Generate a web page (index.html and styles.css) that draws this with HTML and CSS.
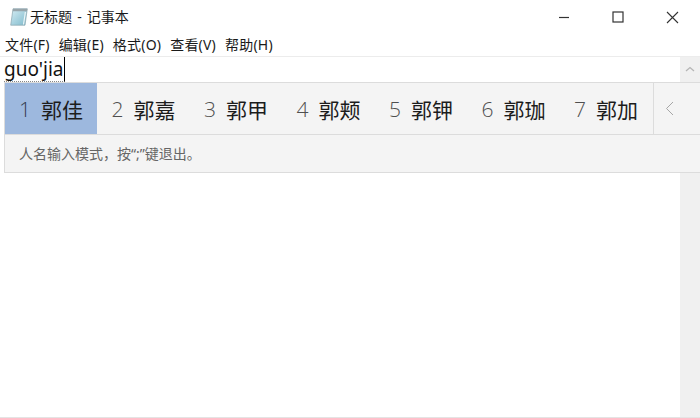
FILE: index.html
```html
<!DOCTYPE html>
<html lang="zh-CN">
<head>
<meta charset="utf-8">
<title>无标题 - 记事本</title>
<link rel="stylesheet" href="styles.css">
</head>
<body>
<div class="window">
  <header class="titlebar">
    <div class="title-left">
      <svg class="app-icon" width="18" height="18" viewBox="0 0 18 18">
        <defs>
          <linearGradient id="pad" x1="0" y1="0" x2="1" y2="1">
            <stop offset="0" stop-color="#d6edf4"/>
            <stop offset="1" stop-color="#7db9cb"/>
          </linearGradient>
        </defs>
        <path d="M3 .8H17.300L15 17.200H.7Z" fill="url(#pad)" stroke="#8aa5ae" stroke-width=".7"/>
        <path d="M3 .8H17.300L17 3.200H2.700Z" fill="#98a5aa"/>
        <path d="M15.400 4L13.500 16.500" stroke="#eef6f8" stroke-width="1.200"/>
      </svg>
      <span class="title-text">无标题 - 记事本</span>
    </div>
    <div class="controls">
      <span class="control">
        <svg width="12" height="12" viewBox="0 0 12 12"><path d="M1 6.500H11" stroke="#333" stroke-width="1.200"/></svg>
      </span>
      <span class="control">
        <svg width="12" height="12" viewBox="0 0 12 12"><rect x="1" y="1" width="10" height="10" fill="none" stroke="#333" stroke-width="1.200"/></svg>
      </span>
      <span class="control">
        <svg width="13" height="13" viewBox="0 0 13 13"><path d="M1 1L12 12M12 1L1 12" stroke="#333" stroke-width="1.100"/></svg>
      </span>
    </div>
  </header>
  <nav class="menubar">
    <span>文件(F)</span><span>编辑(E)</span><span>格式(O)</span><span>查看(V)</span><span>帮助(H)</span>
  </nav>
  <main class="editor">
    <div class="text-area">
      <span class="composition">guo'jia</span>
    </div>
    <div class="scrollbar">
      <svg class="scroll-up" width="10" height="6" viewBox="0 0 10 6"><path d="M1 5L5 1.500L9 5" fill="none" stroke="#b5b5b5" stroke-width="1.300"/></svg>
    </div>
    <section class="ime">
      <div class="candidates">
        <div class="candidate selected"><span class="num">1</span><span class="word">郭佳</span></div>
        <div class="candidate"><span class="num">2</span><span class="word">郭嘉</span></div>
        <div class="candidate"><span class="num">3</span><span class="word">郭甲</span></div>
        <div class="candidate"><span class="num">4</span><span class="word">郭颊</span></div>
        <div class="candidate"><span class="num">5</span><span class="word">郭钾</span></div>
        <div class="candidate"><span class="num">6</span><span class="word">郭珈</span></div>
        <div class="candidate"><span class="num">7</span><span class="word">郭加</span></div>
        <div class="page-btn">
          <svg width="9" height="15" viewBox="0 0 9 15"><path d="M8 1L1.500 7.500L8 14" fill="none" stroke="#a6a6a6" stroke-width="1"/></svg>
        </div>
      </div>
      <div class="hint">人名输入模式，按“;”键退出。</div>
    </section>
  </main>
</div>
</body>
</html>
```
FILE: styles.css
```css
* { box-sizing: border-box; }
html, body { margin: 0; padding: 0; }
body {
  width: 700px;
  height: 418px;
  overflow: hidden;
  background: #fff;
  font-family: "Noto Sans", "Noto Sans CJK SC", sans-serif;
  color: #1a1a1a;
}
.window {
  width: 700px;
  height: 418px;
  display: flex;
  flex-direction: column;
  border-bottom: 1px solid #e4e4e4;
}
.titlebar {
  height: 34px;
  flex: none;
  display: flex;
  justify-content: space-between;
  align-items: center;
}
.title-left {
  display: flex;
  align-items: center;
  gap: 2px;
  padding-left: 10px;
  padding-bottom: 1px;
}
.title-text {
  font-size: 14px;
  line-height: 18px;
  word-spacing: 1.500px;
  white-space: nowrap;
}
.controls { display: flex; height: 100%; padding-right: 1px; }
.control {
  width: 54px;
  display: flex;
  align-items: center;
  justify-content: center;
}
.menubar {
  height: 22px;
  flex: none;
  display: flex;
  gap: 9px;
  padding-left: 5px;
  align-items: center;
  font-size: 14px;
  letter-spacing: .2px;
  line-height: 18px;
  white-space: nowrap;
}
.editor {
  position: relative;
  flex: 1;
  display: flex;
  border-top: 1px solid #ececec;
  min-height: 0;
}
.text-area {
  flex: 1;
  padding: 0 0 0 4px;
}
.composition {
  display: inline-block;
  height: 25px;
  font-size: 19px;
  line-height: 25px;
  color: #111;
  border-right: 1px solid #000;
  border-bottom: 1px dotted #888;
  padding-right: 1px;
}
.scrollbar {
  width: 20px;
  flex: none;
  background: #f0f0f0;
  display: flex;
  justify-content: center;
  padding-top: 9px;
}
.ime {
  position: absolute;
  left: 4px;
  right: 0;
  top: 25px;
  height: 91px;
  background: #f4f4f4;
  border: 1px solid #dcdcdc;
  border-right: 0;
  display: flex;
  flex-direction: column;
}
.candidates {
  height: 52px;
  flex: none;
  display: flex;
  border-bottom: 1px solid #dcdcdc;
}
.candidate {
  width: 92.500px;
  flex: none;
  display: flex;
  align-items: center;
  gap: 12px;
  padding-left: 14px;
  white-space: nowrap;
}
.candidate.selected { background: #9db8de; width: 92px; margin-right: .500px; }
.num {
  font-family: "Open Sans", "Noto Sans", sans-serif;
  font-size: 21px;
  font-weight: 300;
  color: #4f4f4f;
  width: 10px;
}
.selected .num { color: #333d4e; }
.word {
  font-family: "Noto Sans CJK SC", sans-serif;
  font-size: 21px;
  color: #1c1c1c;
}
.page-btn {
  width: 46px;
  flex: none;
  border-left: 1px solid #dcdcdc;
  display: flex;
  align-items: center;
  padding-left: 11px;
}
.hint {
  flex: 1;
  display: flex;
  align-items: center;
  padding-left: 14px;
  padding-bottom: 1px;
  font-size: 14px;
  color: #666;
  white-space: nowrap;
}
```
